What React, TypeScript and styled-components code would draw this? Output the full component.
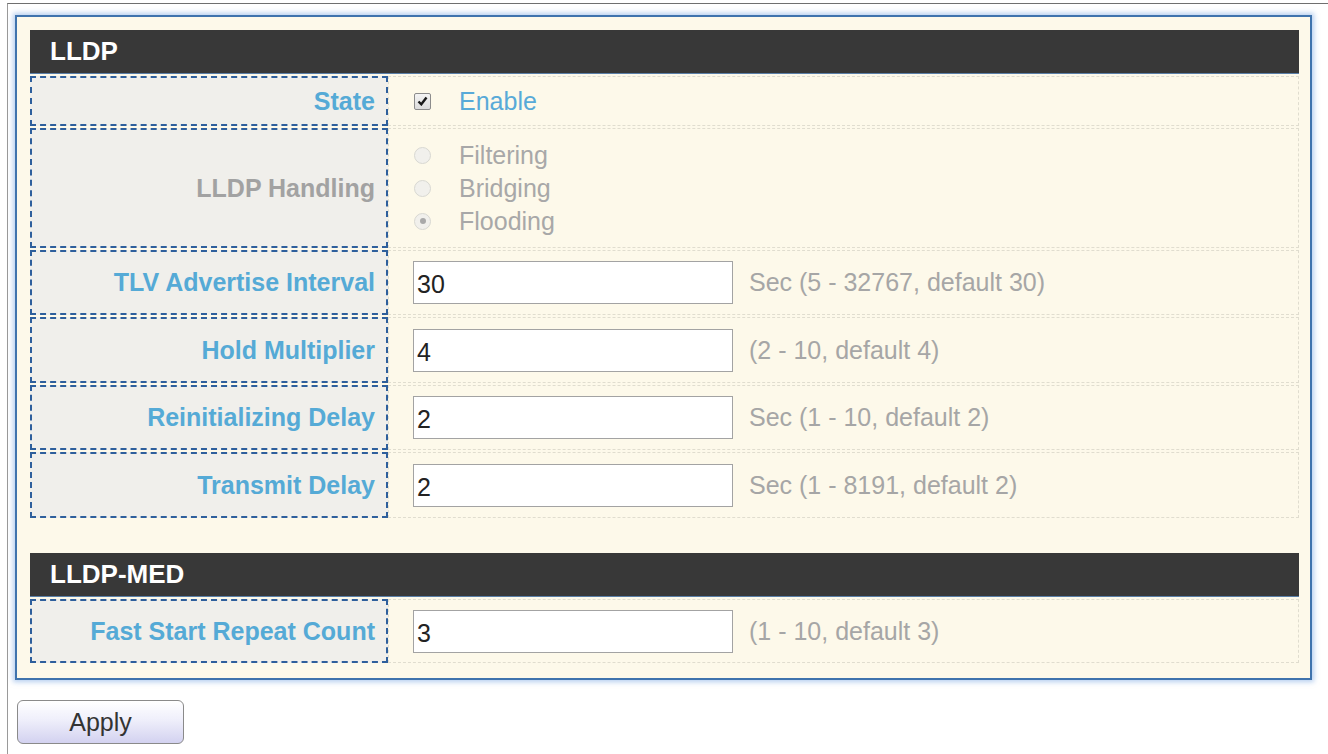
import React from 'react';
import styled, { createGlobalStyle } from 'styled-components';

const GlobalStyle = createGlobalStyle`
  html, body {
    margin: 0;
    padding: 0;
    background: #ffffff;
    font-family: "Liberation Sans", Arial, sans-serif;
  }
`;

const Shell = styled.div`
  margin: 3px 0 0 7px;
  height: 751px;
  border-top: 1px solid #6f6f6f;
  border-left: 1px solid #9a9a9a;
  padding: 11px 0 0 7px;
  box-sizing: border-box;
`;

const Panel = styled.div`
  width: 1297px;
  box-sizing: border-box;
  background: #fdf9ea;
  border: 2px solid #3f73ad;
  box-shadow: 0 0 5px 2px rgba(120, 165, 225, 0.55);
  padding: 13px 11px 15px 13px;
`;

const Header = styled.div<{ $gap?: number }>`
  height: 43px;
  background: #383838;
  color: #ffffff;
  font-weight: bold;
  font-size: 26px;
  line-height: 43px;
  padding-left: 20px;
  margin-top: ${p => p.$gap ?? 0}px;
  border-bottom: 1px solid #5a7fa8;
`;

const Rows = styled.div`
  display: flex;
  flex-direction: column;
  gap: 2px;
  margin-top: 2px;
`;

const Row = styled.div<{ $h: number }>`
  display: flex;
  height: ${p => p.$h}px;
`;

const LabelCell = styled.div<{ $muted?: boolean }>`
  width: 358px;
  flex: none;
  box-sizing: border-box;
  border: 2px dashed #2e5f9c;
  background: #f0efeb;
  display: flex;
  align-items: center;
  justify-content: flex-end;
  padding-right: 11px;
  font-weight: bold;
  font-size: 25px;
  color: ${p => (p.$muted ? '#a2a2a2' : '#55aad6')};
`;

const ValueCell = styled.div<{ $stack?: boolean }>`
  flex: 1;
  box-sizing: border-box;
  border: 1px dashed #e0ddcf;
  display: flex;
  flex-direction: ${p => (p.$stack ? 'column' : 'row')};
  align-items: ${p => (p.$stack ? 'flex-start' : 'center')};
  justify-content: ${p => (p.$stack ? 'center' : 'flex-start')};
  padding-left: 24px;
  gap: ${p => (p.$stack ? '3px' : '16px')};
  font-size: 25px;
`;

const Choice = styled.label<{ $accent?: boolean }>`
  display: flex;
  align-items: center;
  gap: 28px;
  line-height: 30px;
  padding-left: 1px;
  color: ${p => (p.$accent ? '#58aad8' : '#a8a8a8')};
  font-size: 25px;
`;

const Check = styled.span`
  width: 15px;
  height: 15px;
  border: 1px solid #8c8c8c;
  border-radius: 2px;
  background: linear-gradient(#f4f4f4, #dcdcdc);
  display: flex;
  align-items: center;
  justify-content: center;
`;

const Radio = styled.span<{ $on?: boolean }>`
  width: 15px;
  height: 15px;
  border: 1px solid #d8d8d2;
  border-radius: 50%;
  background: #f1f0ec;
  display: flex;
  align-items: center;
  justify-content: center;
  &::after {
    content: '';
    width: 6px;
    height: 6px;
    border-radius: 50%;
    background: ${p => (p.$on ? '#a9a9a9' : 'transparent')};
  }
`;

const Field = styled.input`
  width: 320px;
  height: 43px;
  box-sizing: border-box;
  border: 1px solid #a3a3a3;
  background: #ffffff;
  font-family: "Liberation Sans", Arial, sans-serif;
  font-size: 25px;
  color: #222;
  padding: 4px 0 0 3px;
  outline: none;
`;

const Hint = styled.span`
  color: #a6a6a6;
  font-size: 25px;
`;

const Footer = styled.div`
  padding: 20px 0 0 2px;
`;

const ApplyButton = styled.button`
  width: 167px;
  height: 44px;
  border: 1px solid #8a8a8a;
  border-radius: 6px;
  background: linear-gradient(#ffffff 0%, #efeffb 45%, #d3d2f0 100%);
  font-family: "Liberation Sans", Arial, sans-serif;
  font-size: 25px;
  color: #333;
`;

const CheckMark = () => (
  <svg width="11" height="10" viewBox="0 0 11 10">
    <path d="M1.5 5.5 L4.3 8.3 L9.5 1.5" fill="none" stroke="#1a1a1a" strokeWidth="2.4" />
  </svg>
);

type NumRow = { label: string; value: string; hint: string; h: number };

const timers: NumRow[] = [
  { label: 'TLV Advertise Interval', value: '30', hint: 'Sec (5 - 32767, default 30)', h: 65 },
  { label: 'Hold Multiplier', value: '4', hint: '(2 - 10, default 4)', h: 66 },
  { label: 'Reinitializing Delay', value: '2', hint: 'Sec (1 - 10, default 2)', h: 65 },
  { label: 'Transmit Delay', value: '2', hint: 'Sec (1 - 8191, default 2)', h: 66 },
];

const NumberRow = ({ label, value, hint, h }: NumRow) => (
  <Row $h={h}>
    <LabelCell>{label}</LabelCell>
    <ValueCell>
      <Field defaultValue={value} />
      <Hint>{hint}</Hint>
    </ValueCell>
  </Row>
);

export default function App() {
  return (
    <>
      <GlobalStyle />
      <Shell>
        <Panel>
          <Header>LLDP</Header>
          <Rows>
            <Row $h={50}>
              <LabelCell>State</LabelCell>
              <ValueCell $stack>
                <Choice $accent>
                  <Check><CheckMark /></Check>
                  Enable
                </Choice>
              </ValueCell>
            </Row>
            <Row $h={120}>
              <LabelCell $muted>LLDP Handling</LabelCell>
              <ValueCell $stack>
                <Choice><Radio />Filtering</Choice>
                <Choice><Radio />Bridging</Choice>
                <Choice><Radio $on />Flooding</Choice>
              </ValueCell>
            </Row>
            {timers.map(t => <NumberRow key={t.label} {...t} />)}
          </Rows>

          <Header $gap={35}>LLDP-MED</Header>
          <Rows>
            <NumberRow label="Fast Start Repeat Count" value="3" hint="(1 - 10, default 3)" h={64} />
          </Rows>
        </Panel>
        <Footer>
          <ApplyButton>Apply</ApplyButton>
        </Footer>
      </Shell>
    </>
  );
}
